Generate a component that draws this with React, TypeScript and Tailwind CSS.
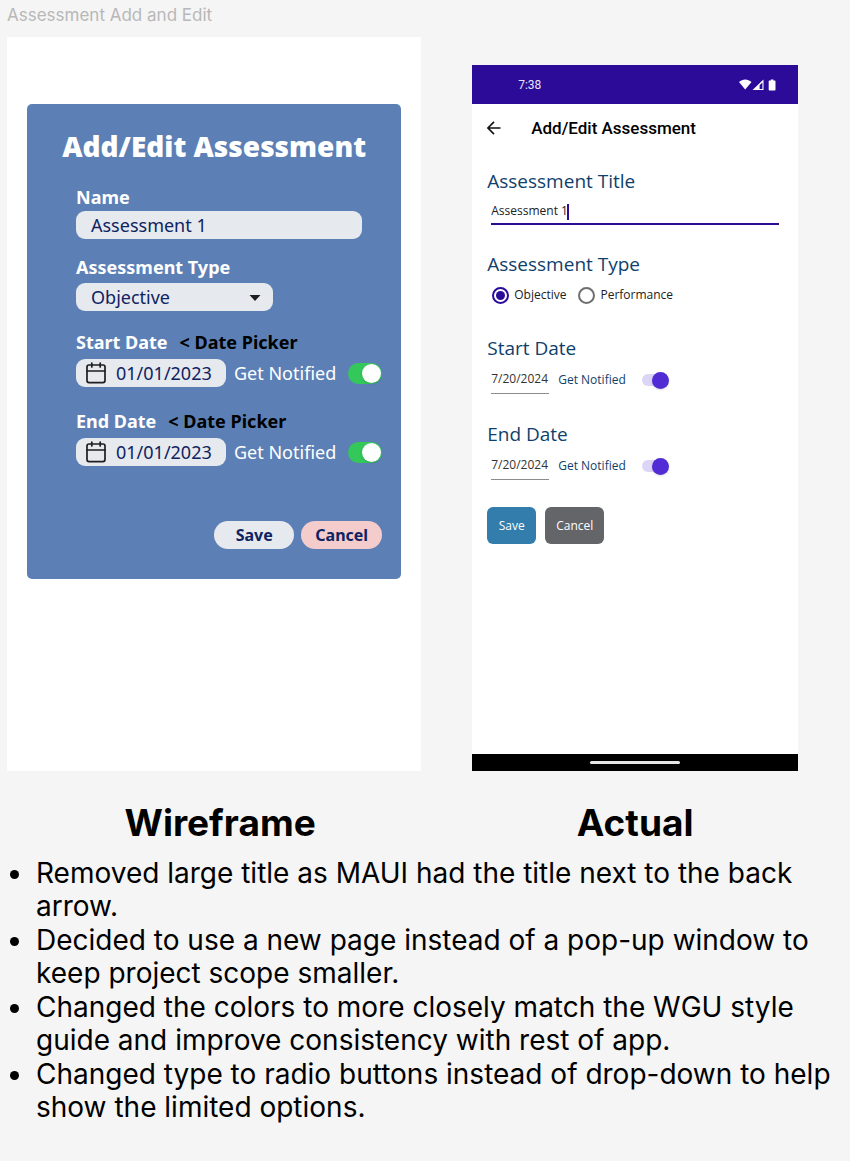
import { useState } from "react";

const notes = [
  "Removed large title as MAUI had the title next to the back arrow.",
  "Decided to use a new page instead of a pop-up window to keep project scope smaller.",
  "Changed the colors to more closely match the WGU style guide and improve consistency with rest of app.",
  "Changed type to radio buttons instead of drop-down to help show the limited options.",
];

function CalendarIcon() {
  return (
    <svg viewBox="0 0 20 22" className="h-[22px] w-5 shrink-0" fill="none" stroke="#1e1e1e" strokeWidth="1.7" strokeLinecap="round" strokeLinejoin="round" aria-hidden="true">
      <rect x="1" y="3" width="18" height="17.6" rx="2" />
      <path d="M1 9h18M5.8 1v4M14.2 1v4" />
    </svg>
  );
}

function WireDate({ id, label }: { id: string; label: string }) {
  const [on, setOn] = useState(true);
  return (
    <div>
      <div className="flex h-6 items-center gap-3 text-lg/6 font-bold">
        <label htmlFor={id} className="text-white">{label}</label>
        <span className="text-black">&lt; Date Picker</span>
      </div>
      <div className="mt-[5px] flex items-center">
        <div className="flex h-7 w-[150px] items-center gap-2.5 rounded-[9px] bg-[#e6e9ee] pl-2.5">
          <CalendarIcon />
          <input id={id} type="text" defaultValue="01/01/2023" className="w-full min-w-0 bg-transparent text-lg/6 text-[#0f2361] outline-none" />
        </div>
        <label className="flex items-center text-lg/6 whitespace-nowrap text-white">
          <span className="ml-2">Get Notified</span>
          <input type="checkbox" role="switch" checked={on} onChange={() => setOn(!on)} className="peer sr-only" />
          <span className="ml-3 flex h-[21px] w-[34px] items-center justify-start rounded-full bg-gray-400 p-px peer-checked:justify-end peer-checked:bg-[#34c759]">
            <span className="size-[19px] rounded-full bg-white shadow-sm" />
          </span>
        </label>
      </div>
    </div>
  );
}

function Wireframe() {
  return (
    <form className="rounded-[5px] bg-[#5c80b5] pt-[23px] pb-[30px] font-['Noto_Sans','Open_Sans',sans-serif]">
      <h2 className="text-center font-['Open_Sans','Noto_Sans',sans-serif] text-[28px]/[38px] font-extrabold text-white">Add/Edit Assessment</h2>
      <div className="mt-5 pr-[19px] pl-[49px]">
        <label htmlFor="wire-name" className="block text-lg/6 font-bold text-white">Name</label>
        <div className="mt-0.5 pr-5">
          <input id="wire-name" type="text" defaultValue="Assessment 1" className="block h-7 w-full rounded-[9px] bg-[#e6e9ee] px-[15px] text-lg/6 text-[#0f2361] outline-none" />
        </div>
        <label htmlFor="wire-type" className="mt-4 block text-lg/6 font-bold text-white">Assessment Type</label>
        <div className="relative mt-1 w-[197px]">
          <select id="wire-type" defaultValue="Objective" className="block h-7 w-full appearance-none rounded-[9px] bg-[#e6e9ee] px-[15px] text-lg/6 text-[#0f2361] outline-none">
            <option>Objective</option>
            <option>Performance</option>
          </select>
          <svg viewBox="0 0 12 6" className="pointer-events-none absolute top-3 right-3 h-1.5 w-3" aria-hidden="true">
            <path d="M0.5 0h11L6 6z" fill="#1e1e1e" />
          </svg>
        </div>
        <div className="mt-[19px] flex flex-col gap-[22px]">
          <WireDate id="wire-start" label="Start Date" />
          <WireDate id="wire-end" label="End Date" />
        </div>
        <div className="mt-[55px] flex justify-end gap-[7px] text-base/6 font-bold text-[#0f2361]">
          <button type="button" className="h-7 w-20 rounded-full bg-[#e6e9ee]">Save</button>
          <button type="button" className="h-7 w-[81px] rounded-full bg-[#f4cccc]">Cancel</button>
        </div>
      </div>
    </form>
  );
}

function PhoneDate({ id, label }: { id: string; label: string }) {
  const [on, setOn] = useState(true);
  return (
    <div>
      <label htmlFor={id} className="block text-[19px]/[26px] text-[#0f3f6b]">{label}</label>
      <div className="flex h-[38px] items-center pl-1">
        <input id={id} type="text" defaultValue="7/20/2024" className="h-7 w-[58px] border-b border-[#8c8c8c] pb-[3px] text-xs/4 text-[#333] outline-none" />
        <label className="ml-[9px] flex items-center text-xs/4 whitespace-nowrap text-[#0f3f6b]">
          Get Notified
          <input type="checkbox" role="switch" checked={on} onChange={() => setOn(!on)} className="peer sr-only" />
          <span className="ml-4 flex h-3 w-[27px] items-center justify-start rounded-full bg-[#dcd5f6] peer-checked:justify-end">
            <span className="size-[17px] rounded-full bg-[#512bd4] shadow" />
          </span>
        </label>
      </div>
    </div>
  );
}

function Radio({ label, checked, onSelect }: { label: string; checked: boolean; onSelect: () => void }) {
  return (
    <label className="flex items-center gap-[5px] text-xs/4 text-[#212121]">
      <input
        type="radio"
        name="assessment-type"
        checked={checked}
        onChange={onSelect}
        className="size-[17px] appearance-none rounded-full border-2 border-[#6f6f6f] bg-clip-content p-0.5 checked:border-[#2b0b98] checked:bg-[#2b0b98]"
      />
      {label}
    </label>
  );
}

function Phone() {
  const [type, setType] = useState("Objective");
  return (
    <div className="flex flex-col bg-white font-['Open_Sans','Noto_Sans',sans-serif]">
      <div className="flex h-[39px] items-center justify-between bg-[#2b0b98] pr-[22px] pl-[46px] font-[Roboto,sans-serif] text-xs/4 text-[#e8e4f5]">
        <span>7:38</span>
        <svg viewBox="0 0 37 12" className="h-3 w-[37px]" fill="#fff" aria-hidden="true">
          <path d="M0 3C3.5-.5 9-.5 12.5 3L6.2 10.600z" />
          <path d="M13.500 11 24.500.500V11zM20.600 9.900h2.800V3.400l-2.800 2.800z" fillRule="evenodd" />
          <path d="M31.800 0.500h2.600v1h1.300q.8 0 .8.800v8.400q0 .8-.8.800h-5.200q-.8 0-.8-.8V2.300q0-.8.8-.8h1.300z" />
        </svg>
      </div>
      <div className="flex h-12 items-center pl-[15px] font-[Roboto,sans-serif]">
        <button type="button" aria-label="Back" className="w-11">
          <svg viewBox="0 0 14 14" className="size-3.5" fill="none" stroke="#111" strokeWidth="1.6" aria-hidden="true">
            <path d="M13.500 7H1.200M7 .9.900 7 7 13.100" />
          </svg>
        </button>
        <h2 className="text-[17px]/6 font-medium text-black">Add/Edit Assessment</h2>
      </div>
      <form className="pt-4 pr-[19px] pb-[210px] pl-[15px]">
        <label htmlFor="phone-title" className="block text-[19px]/[26px] text-[#0f3f6b]">Assessment Title</label>
        <div className="relative ml-1">
          <input id="phone-title" type="text" defaultValue="Assessment 1" className="block h-[31px] w-full border-b-2 border-[#2b0b98] pt-1 pb-0 text-xs/4 text-[#212121] outline-none" />
          <span className="absolute top-2.5 left-[76px] h-4 w-0.5 bg-[#2b0b98]" />
        </div>
        <fieldset className="mt-[26px]">
          <legend className="text-[19px]/[26px] text-[#0f3f6b]">Assessment Type</legend>
          <div className="flex h-9 items-center gap-3 pl-[5px]">
            <Radio label="Objective" checked={type === "Objective"} onSelect={() => setType("Objective")} />
            <Radio label="Performance" checked={type === "Performance"} onSelect={() => setType("Performance")} />
          </div>
        </fieldset>
        <div className="mt-[22px] flex flex-col gap-[22px]">
          <PhoneDate id="phone-start" label="Start Date" />
          <PhoneDate id="phone-end" label="End Date" />
        </div>
        <div className="mt-[22px] flex gap-[9px] text-xs/4 font-medium text-white">
          <button type="button" className="h-[37px] w-[49px] rounded-md bg-[#327dab]">Save</button>
          <button type="button" className="h-[37px] w-[59px] rounded-md bg-[#636569]">Cancel</button>
        </div>
      </form>
      <div className="mt-auto flex h-[17px] items-center justify-center bg-black">
        <div className="h-[3px] w-[90px] rounded-full bg-[#e6e6e6]" />
      </div>
    </div>
  );
}

export default function App() {
  return (
    <main className="min-h-screen bg-[#f5f5f5] pb-9 font-[Inter,sans-serif] text-black">
      <h1 className="px-[7px] pt-[3px] text-[17px]/6 text-[#b8b8b8]">Assessment Add and Edit</h1>
      <div className="grid grid-cols-[414fr_326fr] gap-x-[51px] pt-[10px] pr-[52px] pl-[7px]">
        <section className="bg-white px-5 pt-[67px]">
          <Wireframe />
        </section>
        <section className="pt-7">
          <Phone />
        </section>
        <h2 className="mt-[29px] pl-3 text-center text-[37px]/[45px] font-bold">Wireframe</h2>
        <h2 className="mt-[29px] text-center text-[37px]/[45px] font-bold">Actual</h2>
      </div>
      <ul className="mt-3 flex list-none flex-col gap-px pr-3 pl-2.5 text-[28px]/[33px]">
        {notes.map((note) => (
          <li key={note} className="flex gap-[17px]">
            <span className="mt-[13px] size-[9px] shrink-0 rounded-full bg-black" />
            <span>{note}</span>
          </li>
        ))}
      </ul>
    </main>
  );
}
